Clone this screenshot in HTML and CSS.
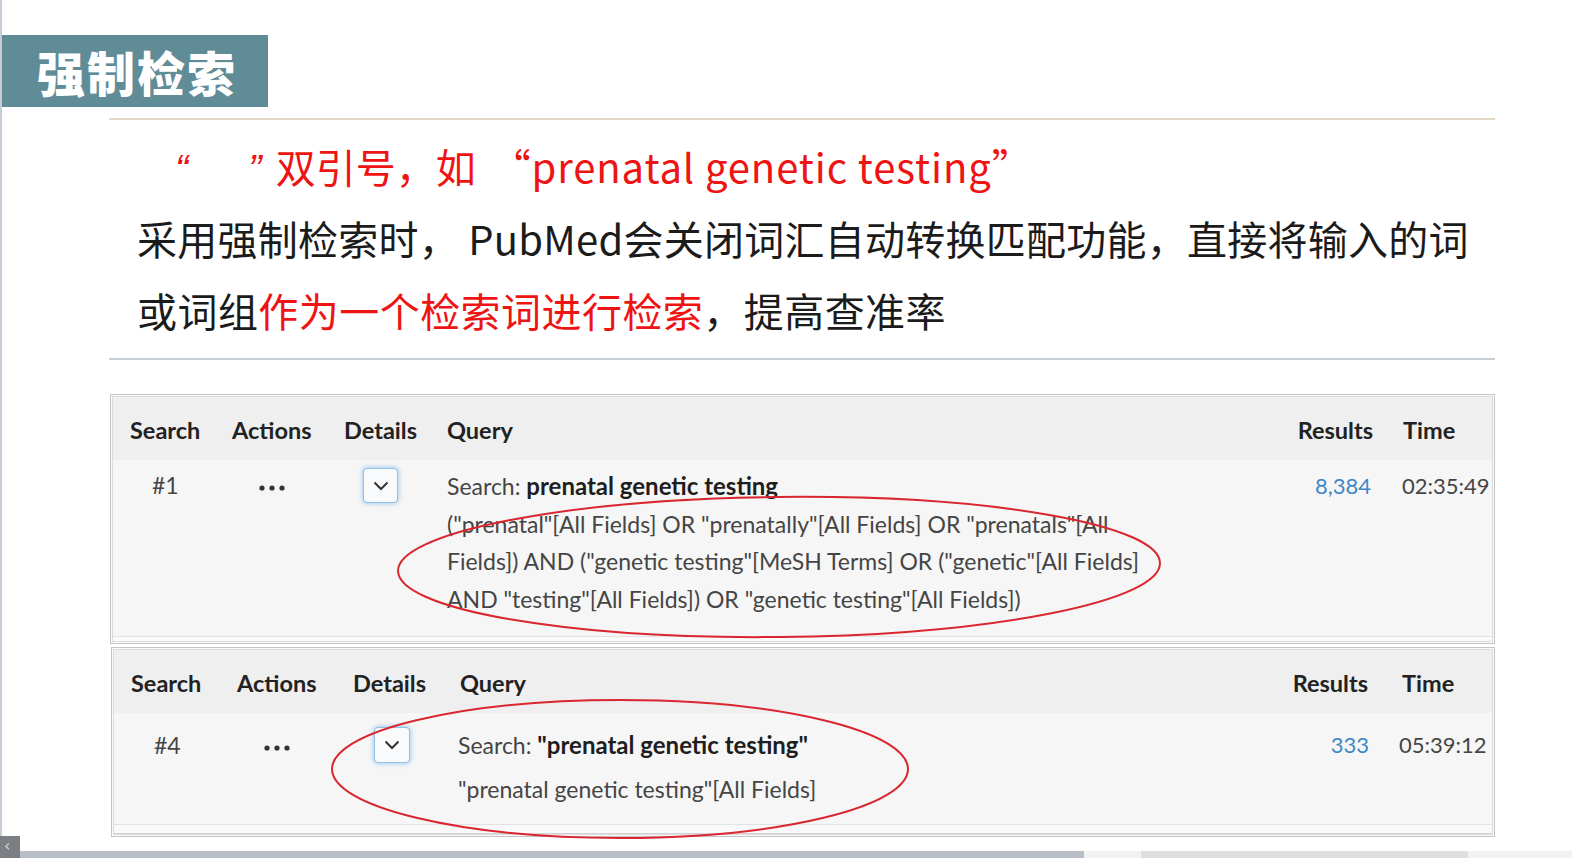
FILE: index.html
```html
<!DOCTYPE html>
<html lang="zh-CN">
<head>
<meta charset="utf-8">
<title>强制检索</title>
<link rel="stylesheet" href="styles.css">
</head>
<body>
<div class="slide">
  <div class="title-box">强制检索</div>
  <div class="rule rule-top"></div>
  <div class="text-block">
    <p class="line red-line"><span class="q q1">“</span><span class="q q2">”</span>双引号，如 <span class="latin">“prenatal genetic testing”</span></p>
    <p class="line dark dark-1">采用强制检索时， PubMed会关闭词汇自动转换匹配功能，直接将输入的词</p>
    <p class="line dark">或词组<span class="red">作为一个检索词进行检索</span>，提高查准率</p>
  </div>
  <div class="rule rule-mid"></div>

  <div class="hist hist-1">
    <div class="hist-head">
      <span>Search</span><span>Actions</span><span>Details</span><span>Query</span><span class="res">Results</span><span class="time">Time</span>
    </div>
    <div class="hist-row">
      <span class="c-num">#1</span>
      <span class="c-act"><svg width="26" height="8" viewBox="0 0 26 8"><circle cx="3" cy="4" r="2.6"/><circle cx="13" cy="4" r="2.6"/><circle cx="23" cy="4" r="2.6"/></svg></span>
      <span class="c-det"><span class="chev"><svg width="16" height="10" viewBox="0 0 16 10"><polyline points="1.5,1.5 8,8 14.5,1.5"/></svg></span></span>
      <div class="c-query">
        <div>Search: <b>prenatal genetic testing</b></div>
        <div class="trans">("prenatal"[All Fields] OR "prenatally"[All Fields] OR "prenatals"[All<br>Fields]) AND ("genetic testing"[MeSH Terms] OR ("genetic"[All Fields]<br>AND "testing"[All Fields]) OR "genetic testing"[All Fields])</div>
      </div>
      <span class="res num">8,384</span>
      <span class="time">02:35:49</span>
    </div>
    <div class="hist-foot"></div>
  </div>

  <div class="hist hist-2">
    <div class="hist-head">
      <span>Search</span><span>Actions</span><span>Details</span><span>Query</span><span class="res">Results</span><span class="time">Time</span>
    </div>
    <div class="hist-row">
      <span class="c-num">#4</span>
      <span class="c-act"><svg width="26" height="8" viewBox="0 0 26 8"><circle cx="3" cy="4" r="2.6"/><circle cx="13" cy="4" r="2.6"/><circle cx="23" cy="4" r="2.6"/></svg></span>
      <span class="c-det"><span class="chev"><svg width="16" height="10" viewBox="0 0 16 10"><polyline points="1.5,1.5 8,8 14.5,1.5"/></svg></span></span>
      <div class="c-query">
        <div>Search: <b>"prenatal genetic testing"</b></div>
        <div class="trans">"prenatal genetic testing"[All Fields]</div>
      </div>
      <span class="res num">333</span>
      <span class="time">05:39:12</span>
    </div>
    <div class="hist-foot"></div>
  </div>

  <div class="bottom-bar">
    <span class="seg seg-a"></span><span class="seg seg-b"></span>
  </div>

  <div class="prev-btn">‹</div>

  <svg class="marks" width="1572" height="858" viewBox="0 0 1572 858">
    <ellipse cx="779" cy="567" rx="381" ry="70" transform="rotate(-0.6 779 567)"/>
    <ellipse cx="620" cy="769" rx="288" ry="69"/>
  </svg>
</div>
</body>
</html>
```

FILE: styles.css
```css
* { box-sizing: border-box; }
html, body { margin: 0; padding: 0; background: #fff; }
body { width: 1572px; height: 858px; overflow: hidden; }

.slide {
  position: relative;
  width: 1572px;
  height: 858px;
  border-left: 2px solid #c5cdd6;
  display: flex;
  flex-direction: column;
  font-family: "Noto Sans CJK SC", "Noto Sans", sans-serif;
}

.title-box {
  margin-top: 35px;
  width: 266px;
  height: 72px;
  background: #5f8c96;
  color: #fff;
  font-weight: 900;
  font-size: 48px;
  line-height: 72px;
  padding-left: 35px;
  letter-spacing: 2px;
}

.rule { margin-left: 107px; width: 1386px; height: 2px; }
.rule-top { margin-top: 11px; background: #e4d9c6; }
.rule-mid { margin-top: 12px; background: #c6ced6; }

.text-block { margin-top: 10px; padding-left: 135px; }
.line {
  margin: 0;
  font-size: 40px;
  line-height: 72px;
  height: 72px;
  color: #1b1b1b;
  white-space: nowrap;
}
.dark { letter-spacing: 0.45px; }
.dark-1 { letter-spacing: 0.25px; }
.red-line { color: #ee1414; }
.red { color: #ee1414; }
.q {
  display: inline-block;
  font-family: "Liberation Sans", sans-serif;
  font-style: italic;
}
.q1 { margin-left: 38px; }
.q2 { margin-left: 60px; margin-right: 14px; }
.latin { letter-spacing: 0.9px; margin-left: 6px; }

.hist {
  margin-left: 108px;
  width: 1385px;
  border: 1px solid #c4c4c4;
  box-shadow: inset 0 0 0 1px #fafafa, inset 0 0 0 2px #dcdcdc;
  background: #f6f6f6;
  font-family: Lato, "Open Sans", sans-serif;
  padding: 2px;
  display: flex;
  flex-direction: column;
}
.hist-1 { margin-top: 34px; height: 250px; }
.hist-2 { margin-top: 3px; height: 190px; margin-left: 109px; width: 1384px; }

.hist-head {
  display: grid;
  align-items: center;
  height: 63px;
  background: #efefef;
  font-weight: 700;
  font-size: 23.5px;
  color: #222;
  padding-top: 3px;
}
.hist-row {
  display: grid;
  align-items: start;
  font-size: 23px;
  color: #454545;
  flex: 1;
}
.hist-1 .hist-head, .hist-1 .hist-row {
  grid-template-columns: 102px 112px 103px 1fr 80px 121px;
  padding-left: 17px;
}
.hist-2 .hist-head, .hist-2 .hist-row {
  grid-template-columns: 106px 116px 107px 1fr 80px 122px;
  padding-left: 17px;
}
.hist-1 .hist-row { line-height: 37.5px; padding-top: 7px; }
.hist-2 .hist-row { line-height: 44px; padding-top: 10px; }

.res { text-align: right; }
.hist-1 .hist-head .res { margin-right: -2px; }
.hist-2 .hist-head .res { margin-right: 2px; }
.time { padding-left: 32px; }
.hist-row .time { padding-left: 31px; font-size: 22px; }
.hist-2 .hist-row .time { padding-left: 29px; }
.hist-row .num { font-size: 22px; }
.hist-2 .hist-row .num { margin-right: 1px; }

.c-num { padding-left: 22px; }
.hist-2 .c-num { padding-left: 23px; }
.c-act { padding-left: 27px; }
.c-act svg { fill: #333; vertical-align: middle; }
.c-det { padding-left: 19px; }
.hist-2 .c-det { padding-left: 21px; }
.chev {
  display: flex;
  align-items: center;
  justify-content: center;
  width: 35px;
  height: 35px;
  margin-top: 1px;
  border: 1.5px solid #8fc0e6;
  border-radius: 4px;
  background: #f9fafb;
  box-shadow: 0 0 4px 1px rgba(120, 180, 230, 0.6);
}
.hist-2 .chev { width: 36px; height: 36px; margin-top: 4px; }
.chev polyline { fill: none; stroke: #333; stroke-width: 2; }
.c-query b { color: #1e1e1e; font-weight: 700; font-size: 24px; }
.hist-2 .c-query { margin-left: -2px; }
.trans { white-space: nowrap; }
.num { color: #3f86c6; }

.hist-foot { height: 6px; border-top: 1px solid #e2e2e2; background: #fbfbfb; }
.hist-1 .hist-foot { height: 5px; }
.hist-2 .hist-foot { height: 10px; background: #f9f9f9; border-bottom: 1px solid #d4d4d4; }

.bottom-bar {
  margin-top: auto;
  height: 7px;
  display: flex;
  background: #f2f2f2;
}
.seg { display: block; height: 100%; }
.seg-a { width: 1066px; margin-left: 16px; background: #b7bec6; }
.seg-b { width: 327px; margin-left: 57px; background: #dedfe0; }

.prev-btn {
  position: absolute;
  left: -2px;
  top: 836px;
  width: 20px;
  height: 22px;
  background: #7b7f84;
  color: #cfd2d5;
  font-family: "DejaVu Sans", sans-serif;
  font-size: 16px;
  line-height: 20px;
  padding-left: 4px;
}

.marks {
  position: absolute;
  left: -2px;
  top: 0;
  pointer-events: none;
}
.marks ellipse { fill: none; stroke: #d9262f; stroke-width: 2; }
```
